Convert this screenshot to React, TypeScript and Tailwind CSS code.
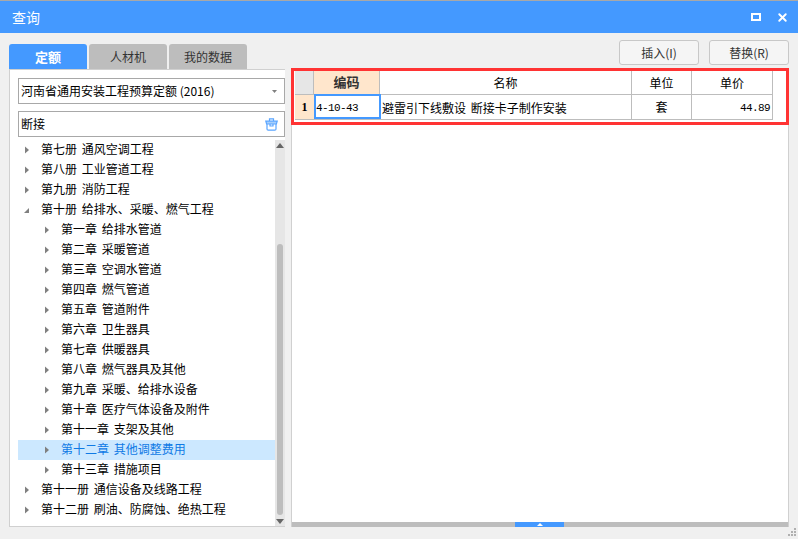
import { X } from 'lucide-react';

const cjk = "font-['Noto_Sans_CJK_SC','Liberation_Sans',sans-serif]";

interface TreeRow {
  label: string;
  level: 1 | 2;
  open?: boolean;
  selected?: boolean;
}

const rows: TreeRow[] = [
  { label: '第七册 通风空调工程', level: 1 },
  { label: '第八册 工业管道工程', level: 1 },
  { label: '第九册 消防工程', level: 1 },
  { label: '第十册 给排水、采暖、燃气工程', level: 1, open: true },
  { label: '第一章 给排水管道', level: 2 },
  { label: '第二章 采暖管道', level: 2 },
  { label: '第三章 空调水管道', level: 2 },
  { label: '第四章 燃气管道', level: 2 },
  { label: '第五章 管道附件', level: 2 },
  { label: '第六章 卫生器具', level: 2 },
  { label: '第七章 供暖器具', level: 2 },
  { label: '第八章 燃气器具及其他', level: 2 },
  { label: '第九章 采暖、给排水设备', level: 2 },
  { label: '第十章 医疗气体设备及附件', level: 2 },
  { label: '第十一章 支架及其他', level: 2 },
  { label: '第十二章 其他调整费用', level: 2, selected: true },
  { label: '第十三章 措施项目', level: 2 },
  { label: '第十一册 通信设备及线路工程', level: 1 },
  { label: '第十二册 刷油、防腐蚀、绝热工程', level: 1 },
];

function Arrow({ open }: { open?: boolean }) {
  return (
    <svg width="6" height="8" viewBox="0 0 6 8" className="shrink-0">
      {open ? <path d="M0 7 L5 2 V7 Z" fill="#808080" /> : <path d="M1 0.5 L5 4 L1 7.5 Z" fill="#808080" />}
    </svg>
  );
}

function Tab({ label, active }: { label: string; active?: boolean }) {
  return (
    <div
      className={`w-[78px] h-[25px] flex items-center justify-center rounded-t-[3px] ${
        active ? 'bg-[#4499ff] text-white font-bold text-[13px]' : 'bg-[#bdbdbd] text-[#333] text-[12px]'
      }`}
    >
      {label}
    </div>
  );
}

function ActionButton({ label }: { label: string }) {
  return (
    <button className="w-[80px] h-[25px] border border-[#c8c8c8] rounded-[3px] bg-[#f5f5f5] text-[12px] text-[#333]">
      {label}
    </button>
  );
}

export default function App() {
  return (
    <div className={`w-[798px] h-[539px] flex flex-col bg-[#f0f0f0] text-black overflow-hidden ${cjk}`}>
      {/* title bar */}
      <div className="h-[33px] shrink-0 border-t border-[#a8a8a8] bg-[#4499ff] flex items-center pl-[12px] pr-[9px] text-white">
        <span className="text-[14px] flex-1">查询</span>
        <span className="w-[10px] h-[8px] border-2 border-white mr-[15px]" />
        <X size={13} strokeWidth={3.5} color="#fff" />
      </div>

      <div className="h-[36px] shrink-0 flex items-end pl-[9px] pr-[9px] justify-between">
        <div className="flex gap-[2px]">
          <Tab label="定额" active />
          <Tab label="人材机" />
          <Tab label="我的数据" />
        </div>
        <div className="flex gap-[10px] self-start mt-[7px]">
          <ActionButton label="插入(I)" />
          <ActionButton label="替换(R)" />
        </div>
      </div>

      <div className="h-[458px] shrink-0 flex pl-[9px] pr-[9px]">
        {/* left panel */}
        <div className="w-[276px] shrink-0 border-l border-b border-[#d0d0d0] bg-white flex flex-col">
          <div className="h-px bg-[#d0d0d0] -mb-px" />
          <div className="pl-[8px] pt-[9px] flex flex-col gap-[7px]">
            <div className="h-[26px] border border-[#a8a8a8] flex items-center justify-between pl-[2px] pr-[7px] text-[12px]">
              <span>河南省通用安装工程预算定额 (2016)</span>
              <svg width="5" height="3" viewBox="0 0 5 3">
                <path d="M0 0 H5 L2.5 3 Z" fill="#808080" />
              </svg>
            </div>
            <div className="h-[26px] border border-[#a8a8a8] flex items-center justify-between pl-[2px] pr-[6px] text-[12px]">
              <span>断接</span>
              <svg width="13" height="13" viewBox="0 0 13 13" fill="none" stroke="#5aa5ff" strokeWidth="1.2">
                <path d="M4.5 3 V0.8 H8.5 V3" />
                <path d="M0.8 3.2 H12.2 L11.4 6 H1.6 Z" fill="#a6cffc" />
                <path d="M2 6 V11 Q2 12.2 3.2 12.2 H9.8 Q11 12.2 11 11 V6" />
                <path d="M5 6 V8 H8 V6" />
              </svg>
            </div>
          </div>
          <div className="flex-1 flex pl-[8px] pt-[3px] min-h-0">
            <div className="flex-1 min-w-0">
              {rows.map((row) => (
                <div
                  key={row.label}
                  className={`h-[20px] flex items-center text-[12px] [word-spacing:2px] gap-[11px] ${
                    row.level === 1 ? 'pl-[6px]' : 'pl-[26px]'
                  } ${row.selected ? 'bg-[#cce8ff] text-[#0f7ae5]' : ''}`}
                >
                  <Arrow open={row.open} />
                  <span className="pb-[3px]">{row.label}</span>
                </div>
              ))}
            </div>
            {/* scrollbar */}
            <div className="w-[10px] shrink-0 bg-[#e6e6e6] flex flex-col items-center pt-[3px] pb-[2px]">
              <svg width="8" height="5" viewBox="0 0 8 5">
                <path d="M0 5 L4 0 L8 5 Z" fill="#666" />
              </svg>
              <div className="w-[6px] h-[271px] mt-[96px] rounded-[3px] bg-[#bdbdbd]" />
              <svg width="8" height="5" viewBox="0 0 8 5" className="mt-auto">
                <path d="M0 0 L8 0 L4 5 Z" fill="#666" />
              </svg>
            </div>
          </div>
        </div>

        <div className="w-[6px] shrink-0" />

        {/* right panel */}
        <div className="flex-1 -mt-px border-l border-r border-[#d0d0d0] bg-white flex flex-col">
          <div className="h-[57px] shrink-0 border-[3px] border-[#ff3333] -ml-px -mr-px pl-[1px]">
            <div className="w-[478px] border-r border-[#bdbdbd]">
              <div className="h-[24px] grid grid-cols-[19px_66px_252px_60px_1fr] border-b border-[#bdbdbd] text-[12px]">
                <div className="bg-[#e6e6e6] border-r border-[#bdbdbd]" />
                <div className="bg-[#ffe6cc] border-r border-[#bdbdbd] flex items-center justify-center font-bold text-[13px] text-[#333] pb-[2px]">
                  编码
                </div>
                <div className="border-r border-[#bdbdbd] flex items-center justify-center">名称</div>
                <div className="border-r border-[#bdbdbd] flex items-center justify-center">单位</div>
                <div className="flex items-center justify-center">单价</div>
              </div>
              <div className="h-[25px] grid grid-cols-[19px_66px_252px_60px_1fr] border-b border-[#bdbdbd] text-[12px]">
                <div className="bg-[#ffe6cc] flex items-center justify-center font-['Liberation_Serif',serif] font-bold">1</div>
                <div className="-mt-px -mr-px border-2 border-[#4499ff] flex items-center pt-[3px] font-['Liberation_Mono',monospace] text-[11px] tracking-[-0.6px]">
                  4-10-43
                </div>
                <div className="border-r border-[#bdbdbd] flex items-center pl-[2px] pt-px [word-spacing:2px]">
                  避雷引下线敷设 断接卡子制作安装
                </div>
                <div className="border-r border-[#bdbdbd] flex items-center justify-center">套</div>
                <div className="flex items-center justify-end pr-[2px] pt-[3px] font-['Liberation_Mono',monospace] text-[11px] tracking-[-0.6px]">44.89</div>
              </div>
            </div>
          </div>
          <div className="flex-1" />
          <div className="h-[5px] bg-[#bdbdbd] pl-[223px]">
            <div className="w-[49px] h-[5px] bg-[#4499ff] flex items-center justify-center">
              <svg width="6" height="3" viewBox="0 0 6 3">
                <path d="M0 3 L3 0 L6 3 Z" fill="#fff" />
              </svg>
            </div>
          </div>
        </div>
      </div>

      {/* resize grip */}
      <div className="flex-1 flex justify-end items-end pr-[1px] pb-[2px]">
        <svg width="10" height="9" viewBox="0 0 10 9" fill="#b0b0b0">
          <rect x="7" y="0" width="2" height="2" />
          <rect x="4" y="3" width="2" height="2" />
          <rect x="7" y="3" width="2" height="2" />
          <rect x="1" y="6" width="2" height="2" />
          <rect x="4" y="6" width="2" height="2" />
          <rect x="7" y="6" width="2" height="2" />
        </svg>
      </div>
    </div>
  );
}
